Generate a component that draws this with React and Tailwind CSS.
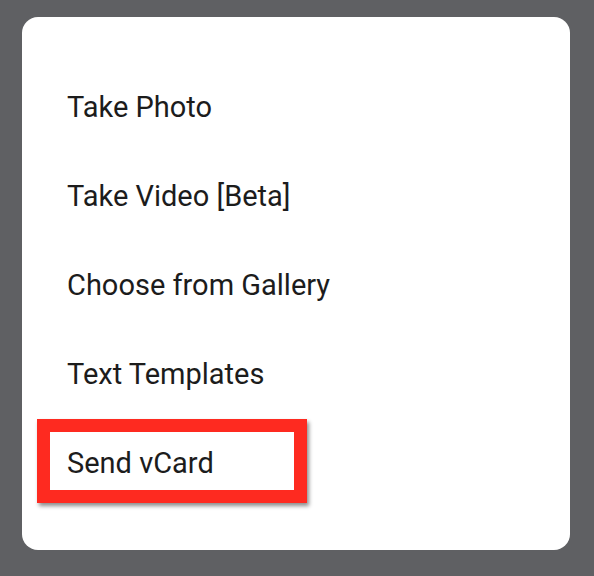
export default function App() {
  const items = ['Take Photo', 'Take Video [Beta]', 'Choose from Gallery', 'Text Templates', 'Send vCard'];
  return (
    <div className="w-[594px] h-[576px] bg-[#5f6063] pt-[17px] pl-[22px]" style={{ fontFamily: 'Roboto, sans-serif' }}>
      <div className="relative w-[548px] h-[533px] bg-white rounded-[16px] pt-[46px] pl-[45px]">
        {items.map((t) => (
          <div key={t} className="h-[89px] leading-[89px] text-[29px] text-[#1c1c1c]">
            {t}
          </div>
        ))}
        <div className="absolute left-[15px] top-[402px] w-[270px] h-[84px] border-[13px] border-[#fe2a20] shadow-[2px_3px_4px_rgba(0,0,0,0.45)]" />
      </div>
    </div>
  );
}
